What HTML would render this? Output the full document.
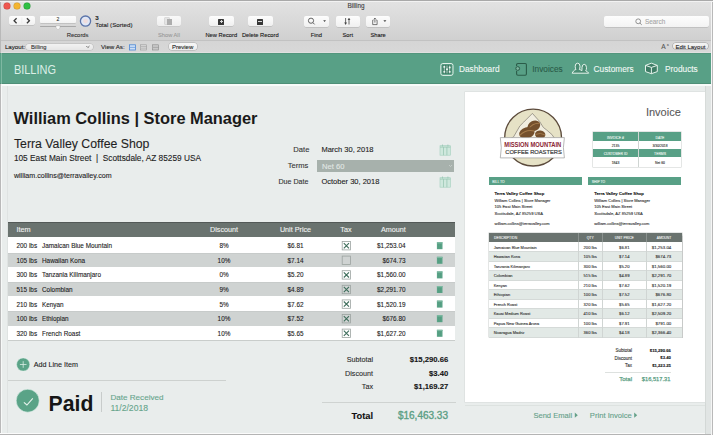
<!DOCTYPE html>
<html><head><meta charset="utf-8"><style>
html,body{margin:0;padding:0;width:713px;height:435px;overflow:hidden;background:#e9edec;}
.t{position:absolute;line-height:1;white-space:nowrap;font-family:"Liberation Sans", sans-serif;}
.b{position:absolute;}
svg.b{overflow:visible;}
</style></head><body>
<div class="b" style="left:0px;top:0px;width:713px;height:40px;background:linear-gradient(#e3e3e3,#d0d0d0);"></div>
<div class="b" style="left:0px;top:40px;width:713px;height:13px;background:linear-gradient(#d5d5d5,#d8d8d8);border-top:1px solid #c2c2c2;box-sizing:border-box;"></div>
<div class="b" style="left:0px;top:51.6px;width:713px;height:1.4px;background:#e0e0e0;"></div>
<div class="b" style="left:4.199999999999999px;top:2.6px;width:6.2px;height:6.2px;background:#ee5850;border-radius:50%;box-shadow:0 0 0 0.5px #c9403a;"></div>
<div class="b" style="left:14.200000000000001px;top:2.6px;width:6.2px;height:6.2px;background:#f3b531;border-radius:50%;box-shadow:0 0 0 0.5px #cf9527;"></div>
<div class="b" style="left:24.0px;top:2.6px;width:6.2px;height:6.2px;background:#30bf44;border-radius:50%;box-shadow:0 0 0 0.5px #1f9a30;"></div>
<div class="b" style="left:9px;top:15.6px;width:25.5px;height:9.7px;background:linear-gradient(#fdfdfd,#f1f1f1);border-radius:2px;box-shadow:0 0.5px 0.5px rgba(0,0,0,.2);"></div>
<div class="b" style="left:39.8px;top:15.9px;width:35.8px;height:6.9px;background:linear-gradient(#fdfdfd,#f4f4f4);border-radius:1px;box-shadow:0 0.5px 0.5px rgba(0,0,0,.2);"></div>
<div class="b" style="left:39.8px;top:26.3px;width:35.8px;height:0.8px;background:#a8a8a8;border-radius:1px;"></div>
<div class="b" style="left:157px;top:15.7px;width:24px;height:10.8px;background:linear-gradient(#f9f9f9,#eeeeee);border-radius:2px;box-shadow:0 0.5px 0.5px rgba(0,0,0,.12);"></div>
<div class="b" style="left:164.5px;top:17.8px;width:4.2px;height:6.5px;background:#e4e4e4;box-shadow:0 0 0 0.5px #bdbdbd;"></div>
<div class="b" style="left:166.6px;top:19.4px;width:5px;height:5.5px;background:#adadad;"></div>
<div class="b" style="left:209px;top:15.7px;width:24.6px;height:10.5px;background:linear-gradient(#fdfdfd,#f0f0f0);border-radius:2px;box-shadow:0 0.5px 0.5px rgba(0,0,0,.2);"></div>
<div class="b" style="left:218.10000000000002px;top:18.6px;width:6.4px;height:6px;background:#383838;border-radius:0.6px;"></div>
<div class="b" style="left:219.60000000000002px;top:21.3px;width:3.4px;height:0.6px;background:#d8d8d8;"></div>
<div class="b" style="left:221.0px;top:19.9px;width:0.6px;height:3.4px;background:#d8d8d8;"></div>
<div class="b" style="left:248px;top:15.7px;width:24.6px;height:10.5px;background:linear-gradient(#fdfdfd,#f0f0f0);border-radius:2px;box-shadow:0 0.5px 0.5px rgba(0,0,0,.2);"></div>
<div class="b" style="left:257.1px;top:18.6px;width:6.4px;height:6px;background:#383838;border-radius:0.6px;"></div>
<div class="b" style="left:258.40000000000003px;top:21.3px;width:3.8px;height:0.7px;background:#d8d8d8;"></div>
<div class="b" style="left:304px;top:16px;width:24.69999999999999px;height:10.6px;background:linear-gradient(#fdfdfd,#f0f0f0);border-radius:2px;box-shadow:0 0.5px 0.5px rgba(0,0,0,.2);"></div>
<div class="b" style="left:335.7px;top:16px;width:24.100000000000023px;height:10.6px;background:linear-gradient(#fdfdfd,#f0f0f0);border-radius:2px;box-shadow:0 0.5px 0.5px rgba(0,0,0,.2);"></div>
<div class="b" style="left:365.8px;top:16px;width:24.599999999999966px;height:10.6px;background:linear-gradient(#fdfdfd,#f0f0f0);border-radius:2px;box-shadow:0 0.5px 0.5px rgba(0,0,0,.2);"></div>
<div class="b" style="left:604px;top:16px;width:104.8px;height:10.9px;background:linear-gradient(#fdfdfd,#f3f3f3);border-radius:2px;box-shadow:0 0.5px 0.5px rgba(0,0,0,.2);"></div>
<div class="b" style="left:26.4px;top:43.7px;width:66.2px;height:6.5px;background:linear-gradient(#f2f2f2,#e6e6e6);border-radius:3px;box-shadow:0 0 0 0.5px #b5b5b5;"></div>
<div class="b" style="left:168.6px;top:43.4px;width:28px;height:6.8px;background:linear-gradient(#f7f7f7,#ebebeb);border-radius:3px;box-shadow:0 0 0 0.5px #a8a8a8;"></div>
<div class="b" style="left:672.8px;top:43.2px;width:35.3px;height:6.3px;background:linear-gradient(#f4f4f4,#e8e8e8);border-radius:3px;box-shadow:0 0 0 0.6px #9c9c9c;"></div>
<div class="b" style="left:0px;top:53px;width:713px;height:31.5px;background:#58a086;"></div>
<div class="b" style="left:0px;top:53px;width:713px;height:1.2px;background:linear-gradient(#4e8c74,#58a086);"></div>
<div class="b" style="left:0px;top:84.5px;width:713px;height:350.5px;background:#e9edec;"></div>
<div class="b" style="left:317.4px;top:160.3px;width:137px;height:12px;background:#a7b1ac;"></div>
<div class="b" style="left:8px;top:221.7px;width:447.2px;height:15.6px;background:#6a736f;border-top:1px solid #535957;box-sizing:border-box;"></div>
<div class="b" style="left:8px;top:237.3px;width:447.2px;height:16.0px;background:#ffffff;"></div>
<div class="b" style="left:8px;top:253.3px;width:447.2px;height:14.0px;background:#cfd3d2;box-shadow:inset 0 0.8px 0 #c5c9c8;"></div>
<div class="b" style="left:8px;top:267.3px;width:447.2px;height:14.5px;background:#ffffff;"></div>
<div class="b" style="left:8px;top:281.8px;width:447.2px;height:14.2px;background:#cfd3d2;box-shadow:inset 0 0.8px 0 #c5c9c8;"></div>
<div class="b" style="left:8px;top:296px;width:447.2px;height:14.9px;background:#ffffff;"></div>
<div class="b" style="left:8px;top:310.9px;width:447.2px;height:14.7px;background:#cfd3d2;box-shadow:inset 0 0.8px 0 #c5c9c8;"></div>
<div class="b" style="left:8px;top:325.6px;width:447.2px;height:14.2px;background:#ffffff;"></div>
<div class="b" style="left:8px;top:339.8px;width:447.2px;height:0.8px;background:#c9cdcb;"></div>
<div class="b" style="left:8.4px;top:380.4px;width:218px;height:0.9px;background:#cdd1cf;"></div>
<div class="b" style="left:101.3px;top:392px;width:0.8px;height:20px;background:#c8cccb;"></div>
<div class="b" style="left:322px;top:402.2px;width:133.5px;height:1px;background:#cfd3d1;"></div>
<div class="b" style="left:0px;top:83.2px;width:713px;height:0.8px;background:#4e8f77;"></div>
<div class="b" style="left:0px;top:84px;width:713px;height:1.6px;background:#f7fbf9;"></div>
<div class="b" style="left:0px;top:0px;width:1px;height:53px;background:#b9b9b9;"></div>
<div class="b" style="left:0px;top:84px;width:1px;height:351px;background:#b9b9b9;"></div>
<div class="b" style="left:0.6px;top:53px;width:0.8px;height:31px;background:#7fb8a2;"></div>
<div class="b" style="left:1px;top:84px;width:1px;height:351px;background:#f7f9f8;"></div>
<div class="b" style="left:0px;top:433px;width:713px;height:1px;background:#fbfbfb;"></div>
<div class="b" style="left:0px;top:434px;width:713px;height:1px;background:#b4b4b4;"></div>
<div class="b" style="left:7px;top:86px;width:0.7px;height:347px;background:#dfe3e2;"></div>
<div class="b" style="left:705px;top:85.6px;width:6px;height:348px;background:#e1e5e4;border-left:1px solid #d3d8d6;box-sizing:border-box;"></div>
<div class="b" style="left:711px;top:0px;width:2px;height:435px;background:#f5f5f5;border-right:1px solid #b9b9b9;box-sizing:border-box;"></div>
<div class="b" style="left:0px;top:0px;width:713px;height:1px;background:#a9a9a9;"></div>
<div class="b" style="left:0px;top:1px;width:713px;height:0.8px;background:#f2f2f2;"></div>
<div class="b" style="left:464.5px;top:92.4px;width:240px;height:309.6px;background:#fff;box-shadow:0 0 0 0.6px #d9dddb;"></div>
<div class="b" style="left:592.9px;top:132.3px;width:88.6px;height:34.4px;background:#fff;box-shadow:0 0 0 0.5px #c9cecc;"></div>
<div class="b" style="left:592.9px;top:132.3px;width:88.6px;height:8.7px;background:#58a086;"></div>
<div class="b" style="left:592.9px;top:148.9px;width:88.6px;height:8.3px;background:#58a086;"></div>
<div class="b" style="left:638px;top:132.3px;width:0.5px;height:34.4px;background:#cfd5d2;"></div>
<div class="b" style="left:488.6px;top:176.8px;width:93.2px;height:8.6px;background:#58a086;"></div>
<div class="b" style="left:588px;top:176.8px;width:93.2px;height:8.6px;background:#58a086;"></div>
<div class="b" style="left:488.6px;top:232.6px;width:193px;height:104.8px;background:#fff;box-shadow:0 0 0 0.5px #c9cecc,0.5px 0.8px 1px rgba(0,0,0,.22);"></div>
<div class="b" style="left:488.6px;top:232.6px;width:193px;height:9.5px;background:#6a736f;"></div>
<div class="b" style="left:488.6px;top:251.4px;width:193px;height:0.5px;background:#d5dad8;"></div>
<div class="b" style="left:488.6px;top:251.9px;width:193px;height:9.5px;background:#e2e9e6;"></div>
<div class="b" style="left:488.6px;top:260.9px;width:193px;height:0.5px;background:#d5dad8;"></div>
<div class="b" style="left:488.6px;top:270.4px;width:193px;height:0.5px;background:#d5dad8;"></div>
<div class="b" style="left:488.6px;top:270.9px;width:193px;height:9.5px;background:#e2e9e6;"></div>
<div class="b" style="left:488.6px;top:279.9px;width:193px;height:0.5px;background:#d5dad8;"></div>
<div class="b" style="left:488.6px;top:289.4px;width:193px;height:0.5px;background:#d5dad8;"></div>
<div class="b" style="left:488.6px;top:289.9px;width:193px;height:9.5px;background:#e2e9e6;"></div>
<div class="b" style="left:488.6px;top:298.9px;width:193px;height:0.5px;background:#d5dad8;"></div>
<div class="b" style="left:488.6px;top:308.4px;width:193px;height:0.5px;background:#d5dad8;"></div>
<div class="b" style="left:488.6px;top:308.9px;width:193px;height:9.5px;background:#e2e9e6;"></div>
<div class="b" style="left:488.6px;top:317.9px;width:193px;height:0.5px;background:#d5dad8;"></div>
<div class="b" style="left:488.6px;top:327.4px;width:193px;height:0.5px;background:#d5dad8;"></div>
<div class="b" style="left:488.6px;top:327.9px;width:193px;height:9.5px;background:#e2e9e6;"></div>
<div class="b" style="left:488.6px;top:336.9px;width:193px;height:0.5px;background:#d5dad8;"></div>
<div class="b" style="left:577.8px;top:232.6px;width:0.5px;height:105px;background:#d0d5d3;"></div>
<div class="b" style="left:602.4px;top:232.6px;width:0.5px;height:105px;background:#d0d5d3;"></div>
<div class="b" style="left:645.7px;top:232.6px;width:0.5px;height:105px;background:#d0d5d3;"></div>
<div class="b" style="left:577.8px;top:232.6px;width:0.6px;height:9.5px;background:#8a918e;"></div>
<div class="b" style="left:602.4px;top:232.6px;width:0.6px;height:9.5px;background:#8a918e;"></div>
<div class="b" style="left:645.7px;top:232.6px;width:0.6px;height:9.5px;background:#8a918e;"></div>
<div class="b" style="left:604.6px;top:371.8px;width:66.6px;height:0.6px;background:#dde1df;"></div>
<div class="b" style="left:464.5px;top:405.2px;width:240px;height:0.8px;background:#dde2e0;"></div>
<svg width="713" height="435" style="position:absolute;left:0;top:0" font-family="Liberation Sans">
<text x="356.00" y="8.20" font-size="6.4" fill="#3a3a3a" text-anchor="middle" stroke="#3a3a3a" stroke-width="0.1">Billing</text>
<g transform="translate(9,15.6)"><path d="M7.6 2.6 L5.1 5.1 L7.6 7.6" stroke="#3a3a3a" stroke-width="1.3" fill="none"/><path d="M17.9 2.6 L20.4 5.1 L17.9 7.6" stroke="#3a3a3a" stroke-width="1.3" fill="none"/><line x1="12.8" y1="2" x2="12.8" y2="8" stroke="#e6e6e6" stroke-width="0.5"/></g>
<text x="58.00" y="21.40" font-size="5" fill="#333" text-anchor="middle" stroke="#333" stroke-width="0.1">2</text>
<g transform="translate(55.5,25.2)"><path d="M0.5 0.5 H4.5 V2.8 L2.5 4.5 L0.5 2.8 Z" fill="#f8f8f8" stroke="#aaa" stroke-width="0.4"/></g>
<g transform="translate(79,14.5)"><circle cx="6.5" cy="6.6" r="5.1" fill="#dfe7f6" stroke="#5b74aa" stroke-width="1.3"/><circle cx="6.5" cy="6.6" r="2.4" fill="#efdcdc"/></g>
<text x="95.30" y="20.00" font-size="6.2" fill="#222" text-anchor="start" font-weight="bold" stroke="#222" stroke-width="0.1">3</text>
<text x="95.30" y="26.60" font-size="6.2" fill="#222" text-anchor="start" stroke="#222" stroke-width="0.1">Total (Sorted)</text>
<text x="77.60" y="36.50" font-size="5.9" fill="#333" text-anchor="middle" stroke="#333" stroke-width="0.1">Records</text>
<text x="169.00" y="37.00" font-size="5.7" fill="#9a9a9a" text-anchor="middle" stroke="#9a9a9a" stroke-width="0.1">Show All</text>
<text x="221.30" y="37.00" font-size="5.75" fill="#151515" text-anchor="middle" stroke="#151515" stroke-width="0.1">New Record</text>
<text x="260.30" y="37.00" font-size="5.75" fill="#151515" text-anchor="middle" stroke="#151515" stroke-width="0.1">Delete Record</text>
<text x="316.35" y="37.00" font-size="5.75" fill="#151515" text-anchor="middle" stroke="#151515" stroke-width="0.1">Find</text>
<text x="347.75" y="37.00" font-size="5.75" fill="#151515" text-anchor="middle" stroke="#151515" stroke-width="0.1">Sort</text>
<text x="378.10" y="37.00" font-size="5.75" fill="#151515" text-anchor="middle" stroke="#151515" stroke-width="0.1">Share</text>
<g transform="translate(304,16)"><circle cx="7" cy="4.7" r="2.6" fill="none" stroke="#555" stroke-width="0.9"/><line x1="8.9" y1="6.6" x2="10.6" y2="8.4" stroke="#555" stroke-width="0.9"/><path d="M19.2 4.3 H22 L20.6 5.9 Z" fill="#444"/></g>
<g transform="translate(335.7,16)"><path d="M9.9 2 V8.3" stroke="#444" stroke-width="0.8"/><path d="M8.5 6.6 L9.9 8.7 L11.3 6.6 Z" fill="#444"/><path d="M13.3 8.5 V2.4" stroke="#444" stroke-width="0.8"/><path d="M11.9 4.1 L13.3 2 L14.7 4.1 Z" fill="#444"/></g>
<g transform="translate(365.8,16)"><path d="M7.6 4.2 H6.9 V8.6 H11.3 V4.2 H10.6" fill="none" stroke="#555" stroke-width="0.8"/><path d="M9.1 6.6 V2.2 M7.9 3.3 L9.1 2.1 L10.3 3.3" fill="none" stroke="#555" stroke-width="0.8"/><path d="M17.6 4.3 H20.6 L19.1 5.9 Z" fill="#444"/></g>
<g transform="translate(634,17)"><circle cx="4.2" cy="4.3" r="2.4" fill="none" stroke="#888" stroke-width="0.9"/><line x1="5.9" y1="6" x2="7.8" y2="7.9" stroke="#888" stroke-width="0.9"/></g>
<text x="645.00" y="24.00" font-size="6.4" fill="#a6a6a6" text-anchor="start" stroke="#a6a6a6" stroke-width="0.1">Search</text>
<text x="4.90" y="48.80" font-size="6.2" fill="#1a1a1a" text-anchor="start" stroke="#1a1a1a" stroke-width="0.1">Layout:</text>
<text x="31.00" y="48.60" font-size="5.8" fill="#333" text-anchor="start" stroke="#333" stroke-width="0.1">Billing</text>
<g transform="translate(85.5,45)"><path d="M0.8 1 L2.4 2.6 L4 1" fill="none" stroke="#444" stroke-width="0.7"/></g>
<text x="101.00" y="48.80" font-size="6.2" fill="#1a1a1a" text-anchor="start" stroke="#1a1a1a" stroke-width="0.1">View As:</text>
<g transform="translate(129,44.2)"><rect x="0.4" y="0.6" width="6" height="5.2" fill="#cfe0f5" stroke="#4a86d6" stroke-width="0.8"/><line x1="1" y1="3.2" x2="6" y2="3.2" stroke="#4a86d6" stroke-width="0.6"/><rect x="11.6" y="0.6" width="6" height="5.2" fill="#d9d9d9" stroke="#9a9a9a" stroke-width="0.6"/><line x1="12" y1="2.3" x2="17.5" y2="2.3" stroke="#9a9a9a" stroke-width="0.5"/><line x1="12" y1="4" x2="17.5" y2="4" stroke="#9a9a9a" stroke-width="0.5"/><rect x="23.6" y="0.6" width="6" height="5.2" fill="#c8c8c8" stroke="#8a8a8a" stroke-width="0.6"/><line x1="24" y1="3.2" x2="29.5" y2="3.2" stroke="#8a8a8a" stroke-width="0.5"/></g>
<text x="182.60" y="48.60" font-size="6" fill="#222" text-anchor="middle" stroke="#222" stroke-width="0.1">Preview</text>
<text x="661.20" y="49.20" font-size="6.6" fill="#555" text-anchor="start" stroke="#555" stroke-width="0.1">A</text>
<text x="667.00" y="45.60" font-size="3" fill="#666" text-anchor="start" stroke="#666" stroke-width="0.1">a</text>
<text x="690.40" y="48.60" font-size="6" fill="#222" text-anchor="middle" stroke="#222" stroke-width="0.1">Edit Layout</text>
<text x="13.90" y="73.60" font-size="12.8" fill="#dcefe6" text-anchor="start" textLength="42.1" lengthAdjust="spacingAndGlyphs" stroke-width="0" stroke="#dcefe6" stroke-width="0.1">BILLING</text>
<text x="459.00" y="72.00" font-size="8.3" fill="#f2f8f5" text-anchor="start" stroke="#f2f8f5" stroke-width="0.1">Dashboard</text>
<text x="532.30" y="72.00" font-size="8.3" fill="#2b5c49" text-anchor="start" stroke="#2b5c49" stroke-width="0.1">Invoices</text>
<text x="593.60" y="72.00" font-size="8.3" fill="#f2f8f5" text-anchor="start" stroke="#f2f8f5" stroke-width="0.1">Customers</text>
<text x="665.00" y="72.00" font-size="8.3" fill="#f2f8f5" text-anchor="start" stroke="#f2f8f5" stroke-width="0.1">Products</text>
<g transform="translate(440.2,62.9)"><rect x="0.6" y="0.6" width="12.2" height="11.9" rx="2" fill="none" stroke="#e3f1ea" stroke-width="1"/><rect x="2.2" y="2" width="9" height="9" fill="#3b7a63"/><g stroke="#cfe8dc" stroke-width="0.8"><line x1="4.1" y1="2.6" x2="4.1" y2="10.4"/><line x1="6.8" y1="2.6" x2="6.8" y2="10.4"/><line x1="9.5" y1="2.6" x2="9.5" y2="10.4"/></g><g fill="#f0faf5"><rect x="3.2" y="3.2" width="1.8" height="1.6"/><rect x="5.9" y="5.6" width="1.8" height="1.6"/><rect x="8.6" y="3.8" width="1.8" height="1.6"/><rect x="3.2" y="8.2" width="1.8" height="1.4"/><rect x="8.6" y="8.2" width="1.8" height="1.4"/></g></g>
<g transform="translate(514.4,62.5)"><path d="M3.5 1 H10.8 Q12 1 12 2.2 V11.6 Q12 12.8 10.8 12.8 H3.6 Q2.2 12.8 2.2 11.6 V8.5 M2.2 3.5 V2.2 Q2.2 1 3.5 1" fill="none" stroke="#2b5c49" stroke-width="1.1"/><circle cx="3.3" cy="6" r="1.9" fill="#7bb39d" stroke="#2b5c49" stroke-width="1"/></g>
<g transform="translate(572.3,62.8)"><path d="M-0.2 10.4 L1.4 8 Q2.3 7 3.7 6.7 Q2.9 5.6 2.9 3.4 Q3 0.4 5.3 0.4 Q7.6 0.4 7.7 3.4 Q7.7 5.6 7 6.7 Q8.6 7.1 9.7 7.8 Q9.7 7 9.7 4.9 Q9.8 1.5 11.9 1.5 Q14.1 1.5 14.2 4.9 Q14.2 7 13.4 8 Q15.2 8.5 16.4 10.4 Z" fill="#4a8c73" stroke="#e6f3ec" stroke-width="1" stroke-linejoin="round"/></g>
<g transform="translate(644.9,62.5)"><path d="M6.5 0.7 L12.4 2.9 V9.1 L6.5 11.2 L0.6 9.1 V2.9 Z" fill="#3f7d66"/><g fill="none" stroke="#e6f3ec" stroke-width="1" stroke-linejoin="round"><path d="M6.5 0.7 L12.4 2.9 V9.1 L6.5 11.2 L0.6 9.1 V2.9 Z"/><path d="M0.6 2.9 L6.5 4.9 L12.4 2.9 M6.5 4.9 V11.2"/></g></g>
<text x="13.50" y="123.50" font-size="16.4" fill="#1a1a1a" text-anchor="start" font-weight="bold">William Collins | Store Manager</text>
<text x="13.90" y="147.70" font-size="12.3" fill="#1f1f1f" text-anchor="start" stroke="#1f1f1f" stroke-width="0.1">Terra Valley Coffee Shop</text>
<text x="13.90" y="160.80" font-size="8.3" fill="#222" text-anchor="start" xml:space="preserve" stroke="#222" stroke-width="0.1">105 East Main Street  |  Scottsdale, AZ 85259 USA</text>
<text x="13.90" y="178.00" font-size="7.1" fill="#222" text-anchor="start" stroke="#222" stroke-width="0.1">william.collins@terravalley.com</text>
<text x="309.40" y="152.30" font-size="7.6" fill="#333" text-anchor="end" stroke="#333" stroke-width="0.1">Date</text>
<text x="308.40" y="168.30" font-size="7.6" fill="#333" text-anchor="end" stroke="#333" stroke-width="0.1">Terms</text>
<text x="308.40" y="184.30" font-size="7.1" fill="#333" text-anchor="end" stroke="#333" stroke-width="0.1">Due Date</text>
<text x="321.40" y="152.30" font-size="7.5" fill="#222" text-anchor="start" stroke="#222" stroke-width="0.1">March 30, 2018</text>
<text x="321.40" y="184.30" font-size="7.5" fill="#222" text-anchor="start" stroke="#222" stroke-width="0.1">October 30, 2018</text>
<text x="322.00" y="169.20" font-size="7.6" fill="#e1e8e4" text-anchor="start" stroke="#e1e8e4" stroke-width="0.1">Net 60</text>
<g transform="translate(449,165)"><path d="M0 0 L1.5 1.5 L3 0" fill="none" stroke="#d9dfdc" stroke-width="0.6"/></g>
<g transform="translate(439.7,144.5)"><rect x="0.3" y="1.2" width="10.4" height="9.5" fill="#cfe8dd" stroke="#a3cfbd" stroke-width="0.6"/><g stroke="#93c3af" stroke-width="0.7"><line x1="0.3" y1="2.6" x2="10.7" y2="2.6"/><line x1="2.8" y1="0" x2="2.8" y2="2"/><line x1="8.2" y1="0" x2="8.2" y2="2"/><line x1="3.8" y1="2.6" x2="3.8" y2="10.7"/><line x1="7.2" y1="2.6" x2="7.2" y2="10.7"/></g></g>
<g transform="translate(439.7,176.5)"><rect x="0.3" y="1.2" width="10.4" height="9.5" fill="#cfe8dd" stroke="#a3cfbd" stroke-width="0.6"/><g stroke="#93c3af" stroke-width="0.7"><line x1="0.3" y1="2.6" x2="10.7" y2="2.6"/><line x1="2.8" y1="0" x2="2.8" y2="2"/><line x1="8.2" y1="0" x2="8.2" y2="2"/><line x1="3.8" y1="2.6" x2="3.8" y2="10.7"/><line x1="7.2" y1="2.6" x2="7.2" y2="10.7"/></g></g>
<text x="16.50" y="232.20" font-size="7.3" fill="#f2f4f3" text-anchor="start" stroke="#f2f4f3" stroke-width="0.1">Item</text>
<text x="224.00" y="232.20" font-size="7.2" fill="#f2f4f3" text-anchor="middle" stroke="#f2f4f3" stroke-width="0.1">Discount</text>
<text x="295.50" y="232.20" font-size="7.2" fill="#f2f4f3" text-anchor="middle" stroke="#f2f4f3" stroke-width="0.1">Unit Price</text>
<text x="345.90" y="232.20" font-size="7.2" fill="#f2f4f3" text-anchor="middle" stroke="#f2f4f3" stroke-width="0.1">Tax</text>
<text x="393.30" y="232.20" font-size="7.2" fill="#f2f4f3" text-anchor="middle" stroke="#f2f4f3" stroke-width="0.1">Amount</text>
<text x="16.50" y="248.10" font-size="6.4" fill="#222" text-anchor="start" stroke="#222" stroke-width="0.1">200 lbs</text>
<text x="42.00" y="248.10" font-size="6.4" fill="#222" text-anchor="start" stroke="#222" stroke-width="0.1">Jamaican Blue Mountain</text>
<text x="224.00" y="248.10" font-size="6.4" fill="#222" text-anchor="middle" stroke="#222" stroke-width="0.1">8%</text>
<text x="295.50" y="248.10" font-size="6.4" fill="#222" text-anchor="middle" stroke="#222" stroke-width="0.1">$6.81</text>
<text x="405.50" y="248.10" font-size="6.4" fill="#222" text-anchor="end" stroke="#222" stroke-width="0.1">$1,253.04</text>
<g transform="translate(341.8,241.1)"><rect x="0.4" y="0.4" width="8.4" height="8.4" fill="none" stroke="#9ba3a0" stroke-width="0.8"/><path d="M2 2 L7.2 7.2 M7.2 2 L2 7.2" stroke="#3e6d5b" stroke-width="1.1"/></g>
<g transform="translate(437,242.4)"><rect x="-0.1" y="-0.2" width="5.6" height="7" fill="#5aa387"/><rect x="-0.1" y="-0.2" width="5.6" height="1.2" fill="#7dbaa2"/><line x1="1.9" y1="1.6" x2="1.9" y2="6.3" stroke="#4a9277" stroke-width="0.4"/><line x1="3.6" y1="1.6" x2="3.6" y2="6.3" stroke="#4a9277" stroke-width="0.4"/></g>
<text x="16.50" y="262.70" font-size="6.4" fill="#222" text-anchor="start" stroke="#222" stroke-width="0.1">105 lbs</text>
<text x="42.00" y="262.70" font-size="6.4" fill="#222" text-anchor="start" stroke="#222" stroke-width="0.1">Hawaiian Kona</text>
<text x="224.00" y="262.70" font-size="6.4" fill="#222" text-anchor="middle" stroke="#222" stroke-width="0.1">10%</text>
<text x="295.50" y="262.70" font-size="6.4" fill="#222" text-anchor="middle" stroke="#222" stroke-width="0.1">$7.14</text>
<text x="405.50" y="262.70" font-size="6.4" fill="#222" text-anchor="end" stroke="#222" stroke-width="0.1">$674.73</text>
<g transform="translate(341.8,255.7)"><rect x="0.4" y="0.4" width="8.4" height="8.4" fill="none" stroke="#9ba3a0" stroke-width="0.8"/></g>
<g transform="translate(437,257.0)"><rect x="-0.1" y="-0.2" width="5.6" height="7" fill="#5aa387"/><rect x="-0.1" y="-0.2" width="5.6" height="1.2" fill="#7dbaa2"/><line x1="1.9" y1="1.6" x2="1.9" y2="6.3" stroke="#4a9277" stroke-width="0.4"/><line x1="3.6" y1="1.6" x2="3.6" y2="6.3" stroke="#4a9277" stroke-width="0.4"/></g>
<text x="16.50" y="277.30" font-size="6.4" fill="#222" text-anchor="start" stroke="#222" stroke-width="0.1">300 lbs</text>
<text x="42.00" y="277.30" font-size="6.4" fill="#222" text-anchor="start" stroke="#222" stroke-width="0.1">Tanzania Kilimanjaro</text>
<text x="224.00" y="277.30" font-size="6.4" fill="#222" text-anchor="middle" stroke="#222" stroke-width="0.1">0%</text>
<text x="295.50" y="277.30" font-size="6.4" fill="#222" text-anchor="middle" stroke="#222" stroke-width="0.1">$5.20</text>
<text x="405.50" y="277.30" font-size="6.4" fill="#222" text-anchor="end" stroke="#222" stroke-width="0.1">$1,560.00</text>
<g transform="translate(341.8,270.3)"><rect x="0.4" y="0.4" width="8.4" height="8.4" fill="none" stroke="#9ba3a0" stroke-width="0.8"/><path d="M2 2 L7.2 7.2 M7.2 2 L2 7.2" stroke="#3e6d5b" stroke-width="1.1"/></g>
<g transform="translate(437,271.6)"><rect x="-0.1" y="-0.2" width="5.6" height="7" fill="#5aa387"/><rect x="-0.1" y="-0.2" width="5.6" height="1.2" fill="#7dbaa2"/><line x1="1.9" y1="1.6" x2="1.9" y2="6.3" stroke="#4a9277" stroke-width="0.4"/><line x1="3.6" y1="1.6" x2="3.6" y2="6.3" stroke="#4a9277" stroke-width="0.4"/></g>
<text x="16.50" y="291.90" font-size="6.4" fill="#222" text-anchor="start" stroke="#222" stroke-width="0.1">515 lbs</text>
<text x="42.00" y="291.90" font-size="6.4" fill="#222" text-anchor="start" stroke="#222" stroke-width="0.1">Colombian</text>
<text x="224.00" y="291.90" font-size="6.4" fill="#222" text-anchor="middle" stroke="#222" stroke-width="0.1">9%</text>
<text x="295.50" y="291.90" font-size="6.4" fill="#222" text-anchor="middle" stroke="#222" stroke-width="0.1">$4.89</text>
<text x="405.50" y="291.90" font-size="6.4" fill="#222" text-anchor="end" stroke="#222" stroke-width="0.1">$2,291.70</text>
<g transform="translate(341.8,284.9)"><rect x="0.4" y="0.4" width="8.4" height="8.4" fill="none" stroke="#9ba3a0" stroke-width="0.8"/><path d="M2 2 L7.2 7.2 M7.2 2 L2 7.2" stroke="#3e6d5b" stroke-width="1.1"/></g>
<g transform="translate(437,286.2)"><rect x="-0.1" y="-0.2" width="5.6" height="7" fill="#5aa387"/><rect x="-0.1" y="-0.2" width="5.6" height="1.2" fill="#7dbaa2"/><line x1="1.9" y1="1.6" x2="1.9" y2="6.3" stroke="#4a9277" stroke-width="0.4"/><line x1="3.6" y1="1.6" x2="3.6" y2="6.3" stroke="#4a9277" stroke-width="0.4"/></g>
<text x="16.50" y="306.50" font-size="6.4" fill="#222" text-anchor="start" stroke="#222" stroke-width="0.1">210 lbs</text>
<text x="42.00" y="306.50" font-size="6.4" fill="#222" text-anchor="start" stroke="#222" stroke-width="0.1">Kenyan</text>
<text x="224.00" y="306.50" font-size="6.4" fill="#222" text-anchor="middle" stroke="#222" stroke-width="0.1">5%</text>
<text x="295.50" y="306.50" font-size="6.4" fill="#222" text-anchor="middle" stroke="#222" stroke-width="0.1">$7.62</text>
<text x="405.50" y="306.50" font-size="6.4" fill="#222" text-anchor="end" stroke="#222" stroke-width="0.1">$1,520.19</text>
<g transform="translate(341.8,299.5)"><rect x="0.4" y="0.4" width="8.4" height="8.4" fill="none" stroke="#9ba3a0" stroke-width="0.8"/><path d="M2 2 L7.2 7.2 M7.2 2 L2 7.2" stroke="#3e6d5b" stroke-width="1.1"/></g>
<g transform="translate(437,300.8)"><rect x="-0.1" y="-0.2" width="5.6" height="7" fill="#5aa387"/><rect x="-0.1" y="-0.2" width="5.6" height="1.2" fill="#7dbaa2"/><line x1="1.9" y1="1.6" x2="1.9" y2="6.3" stroke="#4a9277" stroke-width="0.4"/><line x1="3.6" y1="1.6" x2="3.6" y2="6.3" stroke="#4a9277" stroke-width="0.4"/></g>
<text x="16.50" y="321.10" font-size="6.4" fill="#222" text-anchor="start" stroke="#222" stroke-width="0.1">100 lbs</text>
<text x="42.00" y="321.10" font-size="6.4" fill="#222" text-anchor="start" stroke="#222" stroke-width="0.1">Ethiopian</text>
<text x="224.00" y="321.10" font-size="6.4" fill="#222" text-anchor="middle" stroke="#222" stroke-width="0.1">10%</text>
<text x="295.50" y="321.10" font-size="6.4" fill="#222" text-anchor="middle" stroke="#222" stroke-width="0.1">$7.52</text>
<text x="405.50" y="321.10" font-size="6.4" fill="#222" text-anchor="end" stroke="#222" stroke-width="0.1">$676.80</text>
<g transform="translate(341.8,314.1)"><rect x="0.4" y="0.4" width="8.4" height="8.4" fill="none" stroke="#9ba3a0" stroke-width="0.8"/><path d="M2 2 L7.2 7.2 M7.2 2 L2 7.2" stroke="#3e6d5b" stroke-width="1.1"/></g>
<g transform="translate(437,315.4)"><rect x="-0.1" y="-0.2" width="5.6" height="7" fill="#5aa387"/><rect x="-0.1" y="-0.2" width="5.6" height="1.2" fill="#7dbaa2"/><line x1="1.9" y1="1.6" x2="1.9" y2="6.3" stroke="#4a9277" stroke-width="0.4"/><line x1="3.6" y1="1.6" x2="3.6" y2="6.3" stroke="#4a9277" stroke-width="0.4"/></g>
<text x="16.50" y="335.70" font-size="6.4" fill="#222" text-anchor="start" stroke="#222" stroke-width="0.1">320 lbs</text>
<text x="42.00" y="335.70" font-size="6.4" fill="#222" text-anchor="start" stroke="#222" stroke-width="0.1">French Roast</text>
<text x="224.00" y="335.70" font-size="6.4" fill="#222" text-anchor="middle" stroke="#222" stroke-width="0.1">10%</text>
<text x="295.50" y="335.70" font-size="6.4" fill="#222" text-anchor="middle" stroke="#222" stroke-width="0.1">$5.65</text>
<text x="405.50" y="335.70" font-size="6.4" fill="#222" text-anchor="end" stroke="#222" stroke-width="0.1">$1,627.20</text>
<g transform="translate(341.8,328.7)"><rect x="0.4" y="0.4" width="8.4" height="8.4" fill="none" stroke="#9ba3a0" stroke-width="0.8"/><path d="M2 2 L7.2 7.2 M7.2 2 L2 7.2" stroke="#3e6d5b" stroke-width="1.1"/></g>
<g transform="translate(437,330.0)"><rect x="-0.1" y="-0.2" width="5.6" height="7" fill="#5aa387"/><rect x="-0.1" y="-0.2" width="5.6" height="1.2" fill="#7dbaa2"/><line x1="1.9" y1="1.6" x2="1.9" y2="6.3" stroke="#4a9277" stroke-width="0.4"/><line x1="3.6" y1="1.6" x2="3.6" y2="6.3" stroke="#4a9277" stroke-width="0.4"/></g>
<g transform="translate(23.2,364.5)"><circle cx="0" cy="0" r="6.6" fill="#5aa387" stroke="#e3f2ec" stroke-width="0.5"/><path d="M0 -3.3 V3.3 M-3.3 0 H3.3" stroke="#d9eee5" stroke-width="0.8"/></g>
<text x="33.70" y="367.00" font-size="7.2" fill="#222" text-anchor="start" stroke="#222" stroke-width="0.1">Add Line Item</text>
<g transform="translate(27.7,400.7)"><circle cx="0" cy="0" r="11.5" fill="#5aa387" stroke="#e3f2ec" stroke-width="0.6"/><path d="M-3.8 1.6 L-0.8 4.3 L5.1 -2.4" fill="none" stroke="#e8f4ee" stroke-width="1.1"/></g>
<text x="48.60" y="410.80" font-size="21.2" fill="#161616" text-anchor="start" font-weight="bold">Paid</text>
<text x="110.40" y="400.00" font-size="8.1" fill="#65a48b" text-anchor="start" stroke="#65a48b" stroke-width="0.1">Date Received</text>
<text x="110.40" y="410.80" font-size="8.6" fill="#65a48b" text-anchor="start" stroke="#65a48b" stroke-width="0.1">11/2/2018</text>
<text x="373.00" y="362.00" font-size="7.2" fill="#2a2a2a" text-anchor="end" stroke="#2a2a2a" stroke-width="0.1">Subtotal</text>
<text x="373.00" y="375.60" font-size="7.2" fill="#2a2a2a" text-anchor="end" stroke="#2a2a2a" stroke-width="0.1">Discount</text>
<text x="373.00" y="389.00" font-size="7.2" fill="#2a2a2a" text-anchor="end" stroke="#2a2a2a" stroke-width="0.1">Tax</text>
<text x="448.30" y="362.00" font-size="7.7" fill="#141414" text-anchor="end" font-weight="bold" stroke="#141414" stroke-width="0.1">$15,290.66</text>
<text x="448.30" y="375.70" font-size="7.7" fill="#141414" text-anchor="end" font-weight="bold" stroke="#141414" stroke-width="0.1">$3.40</text>
<text x="448.30" y="389.20" font-size="7.7" fill="#141414" text-anchor="end" font-weight="bold" stroke="#141414" stroke-width="0.1">$1,169.27</text>
<text x="373.00" y="418.60" font-size="9.3" fill="#111" text-anchor="end" font-weight="bold" stroke="#111" stroke-width="0.1">Total</text>
<text x="448.00" y="418.60" font-size="10" fill="#5c9f85" text-anchor="end" stroke="#5c9f85" stroke-width="0.35">$16,463.33</text>
<g transform="translate(502,108)"><circle cx="31.1" cy="29.6" r="28.4" fill="#e6e2c6" stroke="#5b4a3b" stroke-width="1.3"/><path d="M8 31 L11.6 28.8 L17.9 17.9 L21.8 14 L30.4 5.4 L37.4 13.2 L41.3 19.4 L44.4 21.8 L49.9 26.5 L53 31 Z" fill="#f1eee0" stroke="#7f7a70" stroke-width="0.7"/><g transform="rotate(-25 31.9 17.9)"><ellipse cx="31.9" cy="17.9" rx="6.6" ry="5" fill="#74502d"/><path d="M25.5 18.5 Q31.9 14.5 38.3 18" stroke="#a57c4c" stroke-width="0.9" fill="none"/></g><g transform="rotate(-15 24.9 24.9)"><ellipse cx="24.9" cy="24.9" rx="7.8" ry="5.6" fill="#74502d"/><path d="M17.3 25.5 Q24.9 21 32.5 25" stroke="#a57c4c" stroke-width="1" fill="none"/></g><g transform="rotate(5 38.2 26.5)"><ellipse cx="38.2" cy="26.5" rx="5.2" ry="4.1" fill="#74502d"/><path d="M33.2 27 Q38.2 24 43.2 26.6" stroke="#a57c4c" stroke-width="0.8" fill="none"/></g><path d="M-1.7 29.6 H62.4 L61.4 39.7 L62.4 49.9 H-1.7 L-0.7 39.7 Z" fill="#fff" stroke="#9a9a9a" stroke-width="0.7"/><text x="30.8" y="39" font-size="6.8" font-weight="bold" fill="#8a2532" text-anchor="middle" textLength="57" lengthAdjust="spacingAndGlyphs">MISSION MOUNTAIN</text><text x="31.5" y="45.9" font-size="6.2" fill="#3d3d3d" stroke="#3d3d3d" stroke-width="0.2" text-anchor="middle" textLength="56.5" lengthAdjust="spacingAndGlyphs">COFFEE ROASTERS</text></g>
<text x="680.80" y="116.20" font-size="11" fill="#595959" text-anchor="end" stroke="#595959" stroke-width="0.1">Invoice</text>
<text x="615.50" y="138.50" font-size="3.4" fill="#eaf4ef" text-anchor="middle" stroke="#eaf4ef" stroke-width="0.1">INVOICE #</text>
<text x="660.00" y="138.50" font-size="3.4" fill="#eaf4ef" text-anchor="middle" stroke="#eaf4ef" stroke-width="0.1">DATE</text>
<text x="615.50" y="146.60" font-size="3.4" fill="#333" text-anchor="middle" stroke="#333" stroke-width="0.1">2135</text>
<text x="660.00" y="146.60" font-size="3.4" fill="#333" text-anchor="middle" stroke="#333" stroke-width="0.1">3/30/2018</text>
<text x="615.50" y="155.00" font-size="3.4" fill="#eaf4ef" text-anchor="middle" stroke="#eaf4ef" stroke-width="0.1">CUSTOMER ID</text>
<text x="660.00" y="155.00" font-size="3.4" fill="#eaf4ef" text-anchor="middle" stroke="#eaf4ef" stroke-width="0.1">TERMS</text>
<text x="615.50" y="163.80" font-size="3.4" fill="#333" text-anchor="middle" stroke="#333" stroke-width="0.1">1843</text>
<text x="660.00" y="163.80" font-size="3.4" fill="#333" text-anchor="middle" stroke="#333" stroke-width="0.1">Net 60</text>
<text x="492.30" y="182.80" font-size="3.4" fill="#eaf4ef" text-anchor="start" stroke="#eaf4ef" stroke-width="0.1">BILL TO</text>
<text x="591.80" y="182.80" font-size="3.4" fill="#eaf4ef" text-anchor="start" stroke="#eaf4ef" stroke-width="0.1">SHIP TO</text>
<text x="494.50" y="194.70" font-size="4.25" fill="#111" text-anchor="start" font-weight="bold" stroke="#111" stroke-width="0.1">Terra Valley Coffee Shop</text>
<text x="494.50" y="201.50" font-size="4.02" fill="#333" text-anchor="start" stroke="#333" stroke-width="0.1">William Collins | Store Manager</text>
<text x="494.50" y="208.30" font-size="4.07" fill="#333" text-anchor="start" stroke="#333" stroke-width="0.1">105 East Main Street</text>
<text x="494.50" y="215.00" font-size="4.1" fill="#333" text-anchor="start" stroke="#333" stroke-width="0.1">Scottsdale, AZ 85259 USA</text>
<text x="494.50" y="225.00" font-size="4.0" fill="#333" text-anchor="start" stroke="#333" stroke-width="0.1">william.collins@terravalley.com</text>
<text x="594.20" y="194.70" font-size="4.25" fill="#111" text-anchor="start" font-weight="bold" stroke="#111" stroke-width="0.1">Terra Valley Coffee Shop</text>
<text x="594.20" y="201.50" font-size="4.02" fill="#333" text-anchor="start" stroke="#333" stroke-width="0.1">William Collins | Store Manager</text>
<text x="594.20" y="208.30" font-size="4.07" fill="#333" text-anchor="start" stroke="#333" stroke-width="0.1">105 East Main Street</text>
<text x="594.20" y="215.00" font-size="4.1" fill="#333" text-anchor="start" stroke="#333" stroke-width="0.1">Scottsdale, AZ 85259 USA</text>
<text x="594.20" y="225.00" font-size="4.0" fill="#333" text-anchor="start" stroke="#333" stroke-width="0.1">william.collins@terravalley.com</text>
<text x="493.70" y="248.70" font-size="3.95" fill="#333" text-anchor="start" stroke="#333" stroke-width="0.1">Jamaican Blue Mountain</text>
<text x="590.20" y="248.70" font-size="4.1" fill="#333" text-anchor="middle" stroke="#333" stroke-width="0.1">200 lbs</text>
<text x="624.30" y="248.70" font-size="4.2" fill="#333" text-anchor="middle" stroke="#333" stroke-width="0.1">$6.81</text>
<text x="671.30" y="248.70" font-size="4.4" fill="#333" text-anchor="end" stroke="#333" stroke-width="0.1">$1,253.04</text>
<text x="493.70" y="258.20" font-size="3.95" fill="#333" text-anchor="start" stroke="#333" stroke-width="0.1">Hawaiian Kona</text>
<text x="590.20" y="258.20" font-size="4.1" fill="#333" text-anchor="middle" stroke="#333" stroke-width="0.1">105 lbs</text>
<text x="624.30" y="258.20" font-size="4.2" fill="#333" text-anchor="middle" stroke="#333" stroke-width="0.1">$7.14</text>
<text x="671.30" y="258.20" font-size="4.4" fill="#333" text-anchor="end" stroke="#333" stroke-width="0.1">$674.73</text>
<text x="493.70" y="267.70" font-size="3.95" fill="#333" text-anchor="start" stroke="#333" stroke-width="0.1">Tanzania Kilimanjaro</text>
<text x="590.20" y="267.70" font-size="4.1" fill="#333" text-anchor="middle" stroke="#333" stroke-width="0.1">300 lbs</text>
<text x="624.30" y="267.70" font-size="4.2" fill="#333" text-anchor="middle" stroke="#333" stroke-width="0.1">$5.20</text>
<text x="671.30" y="267.70" font-size="4.4" fill="#333" text-anchor="end" stroke="#333" stroke-width="0.1">$1,560.00</text>
<text x="493.70" y="277.20" font-size="3.95" fill="#333" text-anchor="start" stroke="#333" stroke-width="0.1">Colombian</text>
<text x="590.20" y="277.20" font-size="4.1" fill="#333" text-anchor="middle" stroke="#333" stroke-width="0.1">515 lbs</text>
<text x="624.30" y="277.20" font-size="4.2" fill="#333" text-anchor="middle" stroke="#333" stroke-width="0.1">$4.89</text>
<text x="671.30" y="277.20" font-size="4.4" fill="#333" text-anchor="end" stroke="#333" stroke-width="0.1">$2,291.70</text>
<text x="493.70" y="286.70" font-size="3.95" fill="#333" text-anchor="start" stroke="#333" stroke-width="0.1">Kenyan</text>
<text x="590.20" y="286.70" font-size="4.1" fill="#333" text-anchor="middle" stroke="#333" stroke-width="0.1">210 lbs</text>
<text x="624.30" y="286.70" font-size="4.2" fill="#333" text-anchor="middle" stroke="#333" stroke-width="0.1">$7.62</text>
<text x="671.30" y="286.70" font-size="4.4" fill="#333" text-anchor="end" stroke="#333" stroke-width="0.1">$1,520.19</text>
<text x="493.70" y="296.20" font-size="3.95" fill="#333" text-anchor="start" stroke="#333" stroke-width="0.1">Ethiopian</text>
<text x="590.20" y="296.20" font-size="4.1" fill="#333" text-anchor="middle" stroke="#333" stroke-width="0.1">100 lbs</text>
<text x="624.30" y="296.20" font-size="4.2" fill="#333" text-anchor="middle" stroke="#333" stroke-width="0.1">$7.52</text>
<text x="671.30" y="296.20" font-size="4.4" fill="#333" text-anchor="end" stroke="#333" stroke-width="0.1">$676.80</text>
<text x="493.70" y="305.70" font-size="3.95" fill="#333" text-anchor="start" stroke="#333" stroke-width="0.1">French Roast</text>
<text x="590.20" y="305.70" font-size="4.1" fill="#333" text-anchor="middle" stroke="#333" stroke-width="0.1">320 lbs</text>
<text x="624.30" y="305.70" font-size="4.2" fill="#333" text-anchor="middle" stroke="#333" stroke-width="0.1">$5.65</text>
<text x="671.30" y="305.70" font-size="4.4" fill="#333" text-anchor="end" stroke="#333" stroke-width="0.1">$1,627.20</text>
<text x="493.70" y="315.20" font-size="3.95" fill="#333" text-anchor="start" stroke="#333" stroke-width="0.1">Kauai Medium Roast</text>
<text x="590.20" y="315.20" font-size="4.1" fill="#333" text-anchor="middle" stroke="#333" stroke-width="0.1">410 lbs</text>
<text x="624.30" y="315.20" font-size="4.2" fill="#333" text-anchor="middle" stroke="#333" stroke-width="0.1">$6.12</text>
<text x="671.30" y="315.20" font-size="4.4" fill="#333" text-anchor="end" stroke="#333" stroke-width="0.1">$2,509.20</text>
<text x="493.70" y="324.70" font-size="3.95" fill="#333" text-anchor="start" stroke="#333" stroke-width="0.1">Papua New Guinea Arona</text>
<text x="590.20" y="324.70" font-size="4.1" fill="#333" text-anchor="middle" stroke="#333" stroke-width="0.1">100 lbs</text>
<text x="624.30" y="324.70" font-size="4.2" fill="#333" text-anchor="middle" stroke="#333" stroke-width="0.1">$7.91</text>
<text x="671.30" y="324.70" font-size="4.4" fill="#333" text-anchor="end" stroke="#333" stroke-width="0.1">$791.00</text>
<text x="493.70" y="334.20" font-size="3.95" fill="#333" text-anchor="start" stroke="#333" stroke-width="0.1">Nicaragua Madriz</text>
<text x="590.20" y="334.20" font-size="4.1" fill="#333" text-anchor="middle" stroke="#333" stroke-width="0.1">360 lbs</text>
<text x="624.30" y="334.20" font-size="4.2" fill="#333" text-anchor="middle" stroke="#333" stroke-width="0.1">$4.18</text>
<text x="671.30" y="334.20" font-size="4.4" fill="#333" text-anchor="end" stroke="#333" stroke-width="0.1">$2,366.40</text>
<text x="494.00" y="239.00" font-size="3.4" fill="#eef1f0" text-anchor="start" stroke="#eef1f0" stroke-width="0.1">DESCRIPTION</text>
<text x="590.20" y="239.00" font-size="3.4" fill="#eef1f0" text-anchor="middle" stroke="#eef1f0" stroke-width="0.1">QTY</text>
<text x="624.30" y="239.00" font-size="3.4" fill="#eef1f0" text-anchor="middle" stroke="#eef1f0" stroke-width="0.1">UNIT PRICE</text>
<text x="664.00" y="239.00" font-size="3.4" fill="#eef1f0" text-anchor="middle" stroke="#eef1f0" stroke-width="0.1">AMOUNT</text>
<text x="632.00" y="352.30" font-size="4.5" fill="#333" text-anchor="end" stroke="#333" stroke-width="0.1">Subtotal</text>
<text x="632.00" y="359.80" font-size="4.5" fill="#333" text-anchor="end" stroke="#333" stroke-width="0.1">Discount</text>
<text x="632.00" y="367.00" font-size="4.5" fill="#333" text-anchor="end" stroke="#333" stroke-width="0.1">Tax</text>
<text x="670.80" y="351.80" font-size="4.2" fill="#111" text-anchor="end" font-weight="bold" stroke="#111" stroke-width="0.1">$15,290.66</text>
<text x="670.80" y="359.30" font-size="4.2" fill="#111" text-anchor="end" font-weight="bold" stroke="#111" stroke-width="0.1">$3.40</text>
<text x="670.80" y="366.60" font-size="4.2" fill="#111" text-anchor="end" font-weight="bold" stroke="#111" stroke-width="0.1">$1,223.25</text>
<text x="632.00" y="381.00" font-size="6.1" fill="#5c9f85" text-anchor="end" stroke="#5c9f85" stroke-width="0.25">Total</text>
<text x="670.30" y="381.00" font-size="5.7" fill="#5c9f85" text-anchor="end" stroke="#5c9f85" stroke-width="0.25">$16,517.31</text>
<text x="533.40" y="418.20" font-size="7.57" fill="#64a088" text-anchor="start" stroke="#64a088" stroke-width="0.1">Send Email</text>
<text x="589.80" y="418.20" font-size="7.65" fill="#64a088" text-anchor="start" stroke="#64a088" stroke-width="0.1">Print Invoice</text>
<g transform="translate(574.8,412.6)"><path d="M0 0 L3 2.6 L0 5.2 Z" fill="#64a088"/></g>
<g transform="translate(634.2,412.6)"><path d="M0 0 L3 2.6 L0 5.2 Z" fill="#64a088"/></g>
</svg>
</body></html>
